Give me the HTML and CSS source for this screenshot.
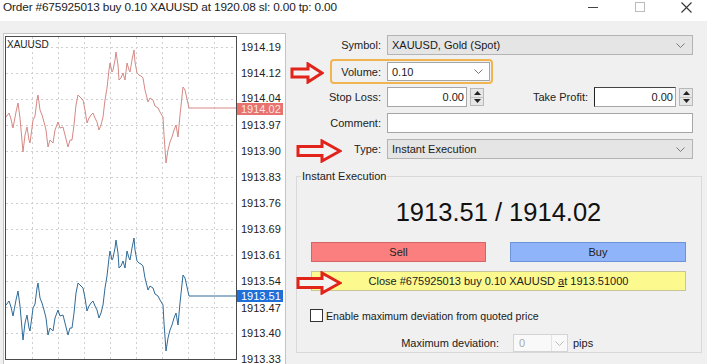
FILE: index.html
```html
<!DOCTYPE html>
<html>
<head>
<meta charset="utf-8">
<link rel="stylesheet" href="styles.css">
</head>
<body>
<div class="window">
  <div class="titlebar">
    <span class="title">Order #675925013 buy 0.10 XAUUSD at 1920.08 sl: 0.00 tp: 0.00</span>
    <div class="controls">
      <span class="ctl"><svg width="10" height="10" viewBox="0 0 10 10"><path d="M0 5.5 H10" stroke="#444" stroke-width="1"/></svg></span>
      <span class="ctl"><svg width="10" height="10" viewBox="0 0 10 10"><rect x="0.5" y="0.5" width="9" height="9" fill="none" stroke="#bbb"/></svg></span>
      <span class="ctl"><svg width="11" height="11" viewBox="0 0 11 11"><path d="M0.5 0.5 L10.5 10.5 M10.5 0.5 L0.5 10.5" stroke="#333" stroke-width="1.1"/></svg></span>
    </div>
  </div>
  <div class="content">
    <div class="chart">
      <svg width="284" height="331" viewBox="3 33 284 331">
        <rect x="3.5" y="33.5" width="282" height="340" fill="#fff" stroke="#c4c4c4"/>
        <g stroke="#cfcfcf" stroke-dasharray="2,3" stroke-width="1">
          <path d="M32.5 37 V359 M58.5 37 V359 M84.5 37 V359 M110.5 37 V359 M136.5 37 V359 M162.5 37 V359 M188.5 37 V359 M214.5 37 V359"/>
          <path d="M6 47.5 H236 M6 73.5 H236 M6 99.5 H236 M6 125.5 H236 M6 151.5 H236 M6 177.5 H236 M6 203.5 H236 M6 229.5 H236 M6 255.5 H236 M6 281.5 H236 M6 307.5 H236 M6 333.5 H236"/>
        </g>
        <polyline fill="none" stroke="#d58985" stroke-width="1" points="6,117 9,113 11,119 13,128 16,112 18,103 20,118 23,152 25,135 27,127 29,140 30,143 32,128 33,120 35,116 37,100 38,95 40,110 42,115 44,122 46,130 48,147 50,140 53,143 55,130 58,122 60,128 63,127 65,135 68,147 70,140 72,140 74,125 76,105 78,95 80,97 83,100 85,110 87,123 89,118 91,115 93,113 95,118 97,122 99,130 101,125 103,117 105,100 107,88 109,70 110,63 112,72 113,70 115,60 116,52 118,65 119,80 121,78 123,73 125,80 127,63 129,70 130,72 132,60 134,50 135,62 137,73 139,75 141,76 143,78 145,90 148,102 150,98 153,100 155,106 158,108 160,112 163,117 164,135 166,163 168,150 170,142 172,137 174,130 176,125 178,137 180,115 183,87 185,90 189,108 236,108"/>
        <polyline transform="translate(0,188)" fill="none" stroke="#2f6b98" stroke-width="1" points="6,117 9,113 11,119 13,128 16,112 18,103 20,118 23,152 25,135 27,127 29,140 30,143 32,128 33,120 35,116 37,100 38,95 40,110 42,115 44,122 46,130 48,147 50,140 53,143 55,130 58,122 60,128 63,127 65,135 68,147 70,140 72,140 74,125 76,105 78,95 80,97 83,100 85,110 87,123 89,118 91,115 93,113 95,118 97,122 99,130 101,125 103,117 105,100 107,88 109,70 110,63 112,72 113,70 115,60 116,52 118,65 119,80 121,78 123,73 125,80 127,63 129,70 130,72 132,60 134,50 135,62 137,73 139,75 141,76 143,78 145,90 148,102 150,98 153,100 155,106 158,108 160,112 163,117 164,135 166,163 168,150 170,142 172,137 174,130 176,125 178,137 180,115 183,87 185,90 189,108 236,108"/>
        <rect x="5.5" y="36.5" width="231" height="323" fill="none" stroke="#4a4a4a"/>
        <text class="sym" x="7" y="48">XAUUSD</text>
        <g class="axis">
          <text x="241" y="51">1914.19</text>
          <text x="241" y="77">1914.12</text>
          <text x="241" y="102">1914.04</text>
          <text x="241" y="129">1913.97</text>
          <text x="241" y="155">1913.90</text>
          <text x="241" y="181">1913.83</text>
          <text x="241" y="207">1913.76</text>
          <text x="241" y="233">1913.69</text>
          <text x="241" y="259">1913.61</text>
          <text x="241" y="285">1913.54</text>
          <text x="241" y="312">1913.47</text>
          <text x="241" y="337">1913.40</text>
          <text x="241" y="363">1913.33</text>
        </g>
        <rect x="237" y="103" width="46" height="12" fill="#e8726d"/>
        <text class="tag tag-red" x="241" y="113">1914.02</text>
        <rect x="237" y="290" width="46" height="12" fill="#1f6fd8"/>
        <text class="tag" x="241" y="300">1913.51</text>
      </svg>
    </div>
    <div class="panel">
      <div class="row">
        <span class="label">Symbol:</span>
        <div class="select wide"><span>XAUUSD, Gold (Spot)</span><svg class="chev" width="9" height="5" viewBox="0 0 9 5"><path d="M0.5 0.5 L4.5 4.5 L8.5 0.5" fill="none" stroke="#777"/></svg></div>
      </div>
      <div class="row vol-row">
        <div class="vol-box">
          <span class="label vol-label">Volume:</span>
          <div class="input vol-input"><span>0.10</span><svg class="chev" width="9" height="5" viewBox="0 0 9 5"><path d="M0.5 0.5 L4.5 4.5 L8.5 0.5" fill="none" stroke="#777"/></svg></div>
        </div>
      </div>
      <div class="row sl-row">
        <span class="label">Stop Loss:</span>
        <div class="input num sl-input">0.00</div>
        <span class="spin"><span class="spin-half"><svg width="7" height="4" viewBox="0 0 7 4"><path d="M0 4 L3.5 0 L7 4 Z" fill="#222"/></svg></span><span class="spin-half"><svg width="7" height="4" viewBox="0 0 7 4"><path d="M0 0 L3.5 4 L7 0 Z" fill="#222"/></svg></span></span>
        <span class="label tp-label">Take Profit:</span>
        <div class="input num tp-input">0.00</div>
        <span class="spin"><span class="spin-half"><svg width="7" height="4" viewBox="0 0 7 4"><path d="M0 4 L3.5 0 L7 4 Z" fill="#222"/></svg></span><span class="spin-half"><svg width="7" height="4" viewBox="0 0 7 4"><path d="M0 0 L3.5 4 L7 0 Z" fill="#222"/></svg></span></span>
      </div>
      <div class="row">
        <span class="label">Comment:</span>
        <div class="input wide"></div>
      </div>
      <div class="row">
        <span class="label">Type:</span>
        <div class="select wide"><span>Instant Execution</span><svg class="chev" width="9" height="5" viewBox="0 0 9 5"><path d="M0.5 0.5 L4.5 4.5 L8.5 0.5" fill="none" stroke="#777"/></svg></div>
      </div>
      <fieldset class="group">
        <legend>Instant Execution</legend>
        <div class="quote">1913.51 / 1914.02</div>
        <div class="btn-row">
          <div class="btn sell">Sell</div>
          <div class="btn buy">Buy</div>
        </div>
        <div class="btn close"><span>Close #675925013 buy 0.10 XAUUSD <u>a</u>t 1913.51000</span></div>
        <div class="check-row"><span class="check"></span><span>Enable maximum deviation from quoted price</span></div>
        <div class="dev-row">
          <span class="dev-label">Maximum deviation:</span>
          <div class="dev-select"><span>0</span><span class="dev-arrow"><svg width="9" height="5" viewBox="0 0 9 5"><path d="M0.5 0.5 L4.5 4.5 L8.5 0.5" fill="none" stroke="#bbb"/></svg></span></div>
          <span class="pips">pips</span>
        </div>
      </fieldset>
    </div>
  </div>
  <svg class="arrow arrow-vol" width="34" height="22" viewBox="0 0 34 22"><path d="M2 7 H18 V2 L32 11 L18 20 V15 H2 Z" fill="#f3f3f3" stroke="#e2231a" stroke-width="3" stroke-linejoin="miter"/></svg>
  <svg class="arrow arrow-type" width="46" height="24" viewBox="0 0 46 24"><path d="M2 7.5 H26 V2 L44 12 L26 22 V16.5 H2 Z" fill="#f3f3f3" stroke="#e2231a" stroke-width="3"/></svg>
  <svg class="arrow arrow-close" width="46" height="24" viewBox="0 0 46 24"><path d="M2 7.5 H26 V2 L44 12 L26 22 V16.5 H2 Z" fill="#f3f3f3" stroke="#e2231a" stroke-width="3"/></svg>
</div>
</body>
</html>
```

FILE: styles.css
```css
* { box-sizing: border-box; }
html, body { margin: 0; padding: 0; }
body {
  width: 707px;
  height: 364px;
  overflow: hidden;
  background: #f0f0f0;
  font-family: "Liberation Sans", Arial, sans-serif;
  font-size: 11px;
  color: #1a1a1a;
}
.window { position: relative; width: 707px; height: 364px; }
.titlebar {
  height: 21px;
  background: #fff;
  display: flex;
  justify-content: space-between;
  align-items: flex-start;
}
.title {
  font-size: 11.8px;
  letter-spacing: -0.15px;
  line-height: 14px;
  padding-left: 3px;
  color: #222;
}
.controls { display: flex; margin-right: -3px; }
.ctl {
  width: 47px;
  height: 14px;
  display: flex;
  align-items: center;
  justify-content: center;
}
.content { display: flex; }
.chart { margin: 12px 0 0 3px; width: 284px; height: 331px; }
.chart svg { display: block; }
.sym { font-size: 10px; fill: #222; font-family: "Liberation Sans", Arial, sans-serif; }
.axis text { font-size: 11px; fill: #222; font-family: "Liberation Sans", Arial, sans-serif; }
.tag { font-size: 11px; fill: #fff; font-family: "Liberation Sans", Arial, sans-serif; }
.tag-red { fill: #fde4e2; }

.panel { display: flex; flex-direction: column; padding-top: 14px; width: 420px; }
.row { display: flex; align-items: center; height: 20px; margin-bottom: 6px; }
.label { width: 94px; text-align: right; margin-right: 6px; color: #222; }
.select {
  height: 20px;
  background: #e5e5e5;
  border: 1px solid #b4b4b4;
  display: flex;
  align-items: center;
  justify-content: space-between;
  padding: 0 7px 0 4px;
}
.wide { width: 306px; }
.input {
  height: 20px;
  background: #fff;
  border: 1px solid #a6a6a6;
  display: flex;
  align-items: center;
  padding: 0 4px;
}
.vol-row { height: 25px; margin-bottom: 3px; margin-top: -2px; }
.vol-box {
  margin-left: 43px;
  width: 163px;
  height: 25px;
  border: 2px solid #f0b450;
  border-radius: 4px;
  display: flex;
  align-items: center;
  padding-right: 1px;
}
.vol-label { width: 49px; }
.vol-input { width: 103px; height: 19px; justify-content: space-between; padding: 0 6px 0 4px; }
.sl-row { margin-bottom: 6px; }
.num { justify-content: flex-end; padding-right: 2px; }
.sl-input { width: 80px; }
.spin {
  width: 14px;
  height: 18px;
  margin-left: 3px;
  display: flex;
  flex-direction: column;
  border: 1px solid #b9b9b9;
  background: #e6e6e6;
}
.spin-half { flex: 1; display: flex; align-items: center; justify-content: center; }
.spin-half + .spin-half { border-top: 1px solid #c4c4c4; }
.tp-label { width: 104px; }
.tp-input { width: 82px; border-left-color: #222; border-top-color: #444; }

.group {
  margin: 5px 0 0 9px;
  width: 406px;
  padding: 0 15px 0 14px;
  border: 1px solid #d9d9d9;
  min-width: 0;
}
.group legend { padding: 0 1px; margin-left: -10px; font-size: 11px; line-height: 13px; color: #222; }
.quote {
  text-align: center;
  font-size: 25.5px;
  line-height: 30px;
  margin-top: 14px;
  color: #111;
}
.btn-row { display: flex; justify-content: space-between; margin-top: 15px; }
.btn {
  height: 20px;
  display: flex;
  align-items: center;
  justify-content: center;
  color: #222;
}
.sell { width: 175px; background: #fa7f7e; border: 1px solid #d36565; }
.buy { width: 176px; background: #8fb4f9; border: 1px solid #6e93d6; }
.close { margin-top: 9px; background: #fcf98f; border: 1px solid #c7c59a; }
.check-row { display: flex; align-items: center; margin-top: 18px; margin-left: -1px; height: 13px; font-size: 10.6px; }
.check { width: 13px; height: 13px; border: 1px solid #333; background: #fff; margin-right: 3px; }
.dev-row { display: flex; align-items: center; margin-top: 12px; height: 18px; }
.dev-label { width: 188px; text-align: right; margin-right: 14px; }
.dev-select {
  width: 55px;
  height: 18px;
  border: 1px solid #d4d4d4;
  background: #f9f9f9;
  color: #aaa;
  display: flex;
  align-items: center;
  justify-content: space-between;
  padding-left: 5px;
}
.dev-arrow { width: 16px; height: 16px; display: flex; align-items: center; justify-content: center; border-left: 1px solid #e3e3e3; }
.pips { margin-left: 5px; }

.arrow { position: absolute; }
.arrow-vol { left: 290px; top: 62px; }
.arrow-type { left: 296px; top: 139px; }
.arrow-close { left: 296px; top: 271px; }
```
